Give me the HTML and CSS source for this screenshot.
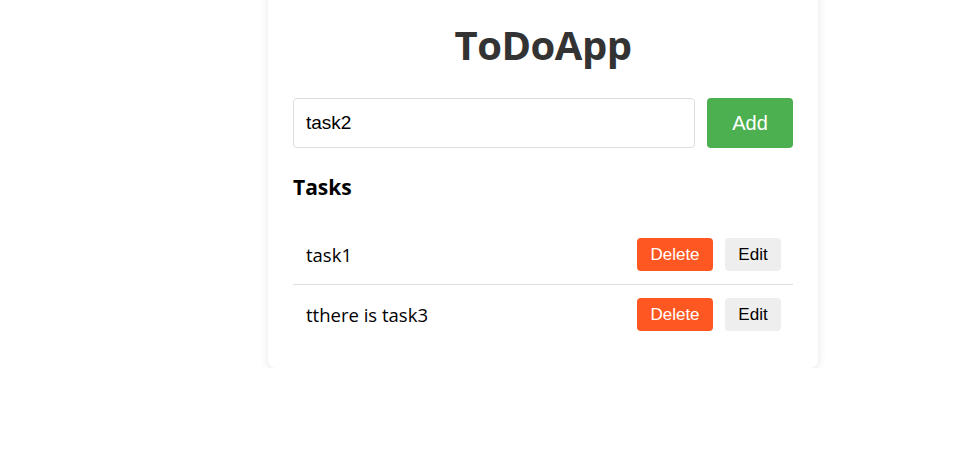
FILE: index.html
```html
<!DOCTYPE html>
<html>
<head>
<meta charset="utf-8">
<link rel="stylesheet" href="styles.css">
</head>
<body>
<div class="page">
  <div class="card">
    <h1 class="title">ToDoApp</h1>
    <div class="add-row">
      <input class="task-input" type="text" value="task2">
      <button class="btn-add">Add</button>
    </div>
    <h2 class="tasks-heading">Tasks</h2>
    <ul class="task-list">
      <li class="task-item">
        <span class="task-text">task1</span>
        <div class="task-actions">
          <button class="btn-delete">Delete</button>
          <button class="btn-edit">Edit</button>
        </div>
      </li>
      <li class="task-item">
        <span class="task-text">tthere is task3</span>
        <div class="task-actions">
          <button class="btn-delete">Delete</button>
          <button class="btn-edit">Edit</button>
        </div>
      </li>
    </ul>
  </div>
</div>
</body>
</html>
```

FILE: styles.css
```css
html, body {
  margin: 0;
  padding: 0;
  background: #ffffff;
}
body {
  font-family: "Open Sans", "Noto Sans", sans-serif;
}
.page {
  padding-left: 268px;
}
.card {
  width: 550px;
  box-sizing: border-box;
  margin-top: -20px;
  padding: 41px 25px 24px;
  background: #fff;
  border-radius: 8px;
  box-shadow: 0 2px 10px rgba(0, 0, 0, 0.1);
}
.title {
  margin: 0 0 29px;
  font-size: 40px;
  line-height: 48px;
  letter-spacing: -0.5px;
  font-weight: 700;
  color: #333;
  text-align: center;
}
.add-row {
  display: flex;
  gap: 12px;
}
.task-input {
  flex: 1;
  height: 50px;
  box-sizing: border-box;
  border: 1px solid #ddd;
  border-radius: 4px;
  padding: 0 12px;
  font-family: "Liberation Sans", Arial, sans-serif;
  font-size: 19px;
  color: #000;
  outline: none;
}
.btn-add {
  width: 86px;
  height: 50px;
  border: none;
  border-radius: 4px;
  background: #4caf50;
  color: #fff;
  font-family: "Liberation Sans", Arial, sans-serif;
  font-size: 20px;
}
.tasks-heading {
  margin: 27px 0 25px;
  font-size: 21px;
  line-height: 25px;
  font-weight: 700;
  color: #000;
}
.task-list {
  list-style: none;
  margin: 0;
  padding: 0;
}
.task-item {
  display: flex;
  align-items: center;
  justify-content: space-between;
  padding: 13px 12px 13px 13px;
  border-bottom: 1px solid #ddd;
}
.task-item:last-child {
  border-bottom: none;
}
.task-text {
  font-size: 18.5px;
  color: #000;
}
.task-actions {
  display: flex;
  gap: 12px;
}
.btn-delete, .btn-edit {
  height: 33px;
  border: none;
  border-radius: 4px;
  font-family: "Liberation Sans", Arial, sans-serif;
  font-size: 17px;
  padding: 0;
}
.btn-delete {
  width: 76px;
  background: #ff5722;
  color: #fff;
}
.btn-edit {
  width: 56px;
  background: #eeeeee;
  color: #000;
}
```
